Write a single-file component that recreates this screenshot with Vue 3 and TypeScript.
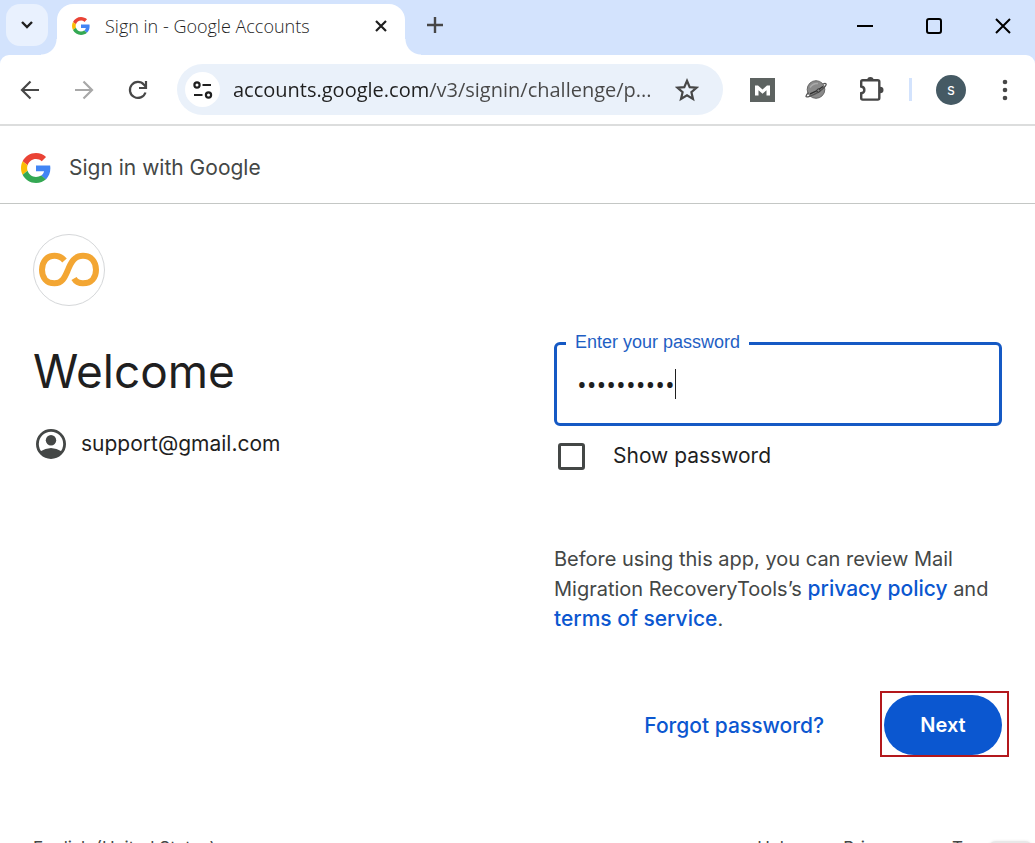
<script setup lang="ts">
import { ref } from 'vue'

const address = ref('accounts.google.com/v3/signin/challenge/p...')
const password = ref('abcdefghij')
const showPassword = ref(false)
const footerLinks: string[] = ['Help', 'Privacy', 'Terms']
</script>

<template>
  <div class="window">
    <header class="tab-strip">
      <button class="tab-search" type="button" aria-label="Search tabs">
        <svg width="14" height="10" viewBox="0 0 14 10"><path d="M2 2l5 5 5-5" fill="none" stroke="#1f1f1f" stroke-width="2.4" /></svg>
      </button>
      <div class="tab">
        <svg class="favicon" viewBox="0 0 48 48">
          <path fill="#EA4335" d="M24 9.5c3.54 0 6.71 1.22 9.21 3.6l6.85-6.85C35.9 2.38 30.47 0 24 0 14.62 0 6.51 5.38 2.56 13.22l7.98 6.19C12.43 13.72 17.74 9.5 24 9.5z" />
          <path fill="#4285F4" d="M46.98 24.55c0-1.57-.15-3.09-.38-4.55H24v9.02h12.94c-.58 2.96-2.26 5.48-4.78 7.18l7.73 6c4.51-4.18 7.09-10.36 7.09-17.65z" />
          <path fill="#FBBC05" d="M10.53 28.59c-.48-1.45-.76-2.99-.76-4.59s.27-3.14.76-4.59l-7.98-6.19C.92 16.46 0 20.12 0 24c0 3.88.92 7.54 2.56 10.78l7.97-6.19z" />
          <path fill="#34A853" d="M24 48c6.48 0 11.93-2.13 15.89-5.81l-7.73-6c-2.15 1.45-4.92 2.3-8.16 2.3-6.26 0-11.57-4.22-13.47-9.91l-7.98 6.19C6.51 42.62 14.62 48 24 48z" />
        </svg>
        <span class="tab-title">Sign in - Google Accounts</span>
        <button class="icon-button" type="button" aria-label="Close tab">
          <svg width="12" height="12" viewBox="0 0 12 12"><path d="M1 1l10 10M11 1L1 11" stroke="#1f1f1f" stroke-width="2.2" /></svg>
        </button>
      </div>
      <button class="icon-button new-tab" type="button" aria-label="New tab">
        <svg width="16" height="16" viewBox="0 0 16 16"><path d="M8 0v16M0 8h16" stroke="#474747" stroke-width="2.4" /></svg>
      </button>
      <div class="window-controls">
        <button class="icon-button" type="button" aria-label="Minimize">
          <svg width="16" height="16" viewBox="0 0 16 16"><path d="M0 8h16" stroke="#000" stroke-width="2" /></svg>
        </button>
        <button class="icon-button" type="button" aria-label="Maximize">
          <svg width="16" height="16" viewBox="0 0 16 16"><rect x="1" y="1" width="14" height="14" rx="2" fill="none" stroke="#000" stroke-width="2" /></svg>
        </button>
        <button class="icon-button" type="button" aria-label="Close">
          <svg width="16" height="16" viewBox="0 0 16 16"><path d="M1 1l14 14M15 1L1 15" stroke="#000" stroke-width="2" /></svg>
        </button>
      </div>
    </header>

    <nav class="toolbar">
      <div class="nav-buttons">
        <button class="icon-button" type="button" aria-label="Back">
          <svg width="20" height="20" viewBox="0 0 20 20"><path d="M19 10H2M10.5 1.5L2 10l8.5 8.5" fill="none" stroke="#474747" stroke-width="2.2" /></svg>
        </button>
        <button class="icon-button" type="button" aria-label="Forward">
          <svg width="20" height="20" viewBox="0 0 20 20"><path d="M1 10h17M9.5 1.5L18 10l-8.5 8.5" fill="none" stroke="#a8a8a8" stroke-width="2.2" /></svg>
        </button>
        <button class="icon-button" type="button" aria-label="Reload">
          <svg width="20" height="20" viewBox="0 0 20 20"><path d="M17.500 12.500a8 8 0 1 1-1.500-7.800L18 7" fill="none" stroke="#474747" stroke-width="2.2" /><path d="M18 1v7h-7" fill="none" stroke="#474747" stroke-width="2.2" /></svg>
        </button>
      </div>
      <div class="address-bar">
        <button class="site-info" type="button" aria-label="View site information">
          <svg width="20" height="18" viewBox="0 0 20 18" fill="none" stroke="#1f1f1f" stroke-width="2.2"><circle cx="4" cy="4" r="2.6" /><path d="M9.500 4H18M1 14h8.500" /><circle cx="15.500" cy="14" r="2.6" /></svg>
        </button>
        <input v-model="address" class="address" type="text" aria-label="Address and search bar" spellcheck="false" />
        <button class="icon-button" type="button" aria-label="Bookmark this tab">
          <svg width="24" height="24" viewBox="0 0 24 24"><path d="M12 2.800l2.700 6.300 6.900.6-5.200 4.500 1.600 6.700-6-3.600-6 3.600 1.600-6.700-5.200-4.500 6.900-.6z" fill="none" stroke="#474747" stroke-width="2.2" /></svg>
        </button>
      </div>
      <div class="extensions">
        <button class="icon-button" type="button" aria-label="Mail extension">
          <svg width="25" height="24" viewBox="0 0 25 24"><rect width="25" height="24" fill="#5d6361" /><path d="M5 17.500V7.500h3l4.500 4 4.500-4h3v10h-3.500v-5.200l-4 3.500-4-3.500v5.200z" fill="#fff" /></svg>
        </button>
        <button class="icon-button" type="button" aria-label="Planet extension">
          <svg width="22" height="20" viewBox="0 0 22 20"><circle cx="11" cy="9.500" r="8.800" fill="#8a8a8a" stroke="#666" /><path d="M5 7.500Q8 3 13 3.500" fill="none" stroke="#aaa" stroke-width="1.500" /><path d="M3.500 12.500C0 16 0 18 4.500 16.300C11 14 17 10 20 6.500C22.500 3.500 20.500 2.800 18 4" fill="none" stroke="#555" stroke-width="1.300" /><path d="M5 14Q12 11.500 18 6.500" fill="none" stroke="#333" stroke-width="1.400" /><circle cx="13.500" cy="10.500" r="1.600" fill="#888" stroke="#333" /></svg>
        </button>
        <button class="icon-button" type="button" aria-label="Extensions">
          <svg width="28" height="26" viewBox="0 0 28 26"><path d="M5.700 3.200h15.100q1.500 0 1.500 1.500v16.400q0 1.500-1.500 1.500H5.700q-1.500 0-1.500-1.500v-4.800c4.200-.8 4.200-6 0-6.800V4.700q0-1.500 1.500-1.500z" fill="none" stroke="#474747" stroke-width="2.400" /><path d="M10.200 3a3.200 3 0 0 1 6.400 0zM23 9.700a3.500 3.300 0 0 1 0 6.600z" fill="#474747" /></svg>
        </button>
        <span class="divider"></span>
        <button class="profile" type="button" aria-label="Profile">s</button>
        <button class="icon-button menu-button" type="button" aria-label="Menu">
          <svg width="6" height="22" viewBox="0 0 6 22" fill="#474747"><circle cx="3" cy="3" r="2.300" /><circle cx="3" cy="11" r="2.300" /><circle cx="3" cy="19" r="2.300" /></svg>
        </button>
      </div>
    </nav>

    <div class="page">
      <div class="page-header">
        <svg class="google-logo" viewBox="0 0 48 48">
          <path fill="#EA4335" d="M24 9.5c3.54 0 6.71 1.22 9.21 3.6l6.85-6.85C35.9 2.38 30.47 0 24 0 14.62 0 6.51 5.38 2.56 13.22l7.98 6.19C12.43 13.72 17.74 9.5 24 9.5z" />
          <path fill="#4285F4" d="M46.98 24.55c0-1.57-.15-3.09-.38-4.55H24v9.02h12.94c-.58 2.96-2.26 5.48-4.78 7.18l7.73 6c4.51-4.18 7.09-10.36 7.09-17.65z" />
          <path fill="#FBBC05" d="M10.53 28.59c-.48-1.45-.76-2.99-.76-4.59s.27-3.14.76-4.59l-7.98-6.19C.92 16.46 0 20.12 0 24c0 3.88.92 7.54 2.56 10.78l7.97-6.19z" />
          <path fill="#34A853" d="M24 48c6.48 0 11.93-2.13 15.89-5.81l-7.73-6c-2.15 1.45-4.92 2.3-8.16 2.3-6.26 0-11.57-4.22-13.47-9.91l-7.98 6.19C6.51 42.62 14.62 48 24 48z" />
        </svg>
        <span>Sign in with Google</span>
      </div>

      <main class="content">
        <section class="intro">
          <svg class="app-logo" viewBox="0 0 72 72">
            <circle cx="36" cy="36" r="35.500" fill="#fff" stroke="#d5d7d9" />
            <path d="M31.500 26.500C28.500 23 25.500 21.800 21.500 21.800C13.500 21.800 9 28 9 35.700C9 43.500 13.500 49.300 21.500 49.300C29 49.300 31.500 44 34.500 37C38 28 41.500 21.800 50 21.800C58.500 21.800 63 28 63 35.700C63 43.500 58.500 49.300 50 49.300C46 49.300 43 48 41 44.500" fill="none" stroke="#f3a633" stroke-width="6" />
          </svg>
          <h1>Welcome</h1>
          <div class="account">
            <svg width="30" height="30" viewBox="0 0 30 30">
              <circle cx="15" cy="15" r="13.600" fill="#fff" stroke="#444746" stroke-width="2.800" />
              <circle cx="15" cy="11.300" r="5.200" fill="#444746" />
              <path d="M4 22.500Q15 15.500 26 22.500Q22 28.500 15 28.500T4 22.500z" fill="#444746" />
            </svg>
            <span>support@gmail.com</span>
          </div>
        </section>

        <form class="sign-in" @submit.prevent>
          <div class="field">
            <label for="password">Enter your password</label>
            <input id="password" v-model="password" :type="showPassword ? 'text' : 'password'" autocomplete="off" />
            <span class="caret"></span>
          </div>
          <label class="show-password">
            <input v-model="showPassword" type="checkbox" />
            <span>Show password</span>
          </label>
          <p class="notice">
            Before using this app, you can review Mail Migration RecoveryTools’s
            <a href="#privacy">privacy policy</a> and <a href="#terms">terms of service</a>.
          </p>
          <div class="actions">
            <a class="forgot" href="#forgot">Forgot password?</a>
            <div class="next-wrap">
              <button class="next" type="submit">Next</button>
            </div>
          </div>
        </form>
      </main>

      <footer class="footer">
        <span>English (United States)</span>
        <nav class="footer-links">
          <a v-for="link in footerLinks" :key="link" href="#">{{ link }}</a>
        </nav>
        <span class="corner-widget"></span>
      </footer>
    </div>
  </div>
</template>

<style>
body {
  margin: 0;
}
</style>

<style scoped>
* {
  box-sizing: border-box;
}

.window {
  display: flex;
  flex-direction: column;
  height: 100vh;
  overflow: hidden;
  background: #d3e3fd;
  color: #1f1f1f;
  font-family: Inter, "Liberation Sans", sans-serif;
}

button {
  padding: 0;
  border: 0;
  background: none;
  font: inherit;
  cursor: pointer;
}

svg {
  display: block;
  flex: none;
}

.icon-button {
  display: grid;
  place-items: center;
  flex: none;
}

.tab-strip {
  display: flex;
  align-items: stretch;
  flex: none;
  height: 55px;
  padding: 4px 24px 0 6px;
}

.tab-search {
  display: grid;
  place-items: center;
  width: 42px;
  height: 42px;
  margin-right: 9px;
  border-radius: 14px;
  background: #e9f1fe;
}

.tab {
  position: relative;
  display: flex;
  align-items: center;
  width: 348px;
  padding: 0 18px 8px 15px;
  border-radius: 16px 16px 0 0;
  background: #fff;
}

.tab::before,
.tab::after {
  content: "";
  position: absolute;
  bottom: 0;
  width: 16px;
  height: 16px;
}

.tab::before {
  right: 100%;
  background: radial-gradient(circle at 0 0, transparent 15px, #fff 16px);
}

.tab::after {
  left: 100%;
  background: radial-gradient(circle at 100% 0, transparent 15px, #fff 16px);
}

.favicon {
  width: 18px;
  height: 18px;
}

.tab-title {
  flex: 1;
  margin-left: 15px;
  font-family: "Open Sans", "Noto Sans", sans-serif;
  font-size: 18px;
  font-weight: 300;
  white-space: nowrap;
}

.new-tab {
  width: 40px;
  height: 42px;
  margin-left: 10px;
}

.window-controls {
  display: flex;
  gap: 53px;
  height: 44px;
  margin-left: auto;
}

.toolbar {
  display: flex;
  align-items: center;
  flex: none;
  height: 71px;
  padding: 0 27px 0 20px;
  border-bottom: 2px solid #dcdddd;
  border-radius: 9px 9px 0 0;
  background: #fff;
}

.nav-buttons {
  display: flex;
  gap: 34px;
}

.address-bar {
  display: flex;
  align-items: center;
  flex: 1;
  height: 51px;
  margin-left: 29px;
  padding: 0 24px 0 8px;
  border-radius: 26px;
  background: #eaf1fa;
}

.site-info {
  display: grid;
  place-items: center;
  flex: none;
  width: 35px;
  height: 35px;
  border-radius: 50%;
  background: #fff;
}

.address {
  flex: 1;
  min-width: 0;
  margin: 0 14px 0 13px;
  padding: 0;
  border: 0;
  outline: 0;
  background: linear-gradient(90deg, #1f1f1f 196px, #474747 196px);
  background-clip: text;
  color: transparent;
  font-family: "Open Sans", "Noto Sans", sans-serif;
  font-size: 20px;
  line-height: 30px;
}

.extensions {
  display: flex;
  align-items: center;
  margin-left: 27px;
}

.extensions > * + * {
  margin-left: 30px;
}

.extensions .divider {
  width: 3px;
  height: 23px;
  margin-left: 24px;
  background: #d3e3fd;
}

.extensions .profile {
  width: 30px;
  height: 30px;
  margin-left: 24px;
  border-radius: 50%;
  background: #455a64;
  color: #fff;
  font-size: 15px;
  line-height: 30px;
}

.extensions .menu-button {
  margin-left: 36px;
}

.page {
  display: flex;
  flex-direction: column;
  flex: 1;
  background: #fff;
}

.page-header {
  display: flex;
  align-items: center;
  gap: 18px;
  height: 78px;
  padding: 6px 21px 0;
  border-bottom: 1px solid #c4c7c5;
  color: #444746;
  font-size: 21px;
}

.google-logo {
  width: 30px;
  height: 30px;
}

.content {
  display: grid;
  grid-template-columns: 1fr 1fr;
  gap: 73px;
  padding: 30px 33px 0;
}

.app-logo {
  width: 72px;
  height: 72px;
}

h1 {
  margin: 35px 0 0;
  font-size: 46px;
  font-weight: 400;
  line-height: 60px;
}

.account {
  display: flex;
  align-items: center;
  gap: 15px;
  margin: 28px 0 0 3px;
  font-size: 21px;
  line-height: 30px;
}

.sign-in {
  padding-top: 108px;
}

.field {
  position: relative;
}

.field label {
  position: absolute;
  top: -12px;
  left: 12px;
  padding: 0 9px;
  background: #fff;
  color: #1f5fc4;
  font-family: "Liberation Sans", Arial, sans-serif;
  font-size: 18px;
  line-height: 24px;
}

.field input {
  display: block;
  width: 100%;
  height: 84px;
  padding: 0 20px;
  border: 3px solid #1559c4;
  border-radius: 6px;
  outline: 0;
  background: #fff;
  color: #1f1f1f;
  font-family: "Open Sans", sans-serif;
  font-size: 26px;
}

.caret {
  position: absolute;
  top: 27px;
  left: 121px;
  width: 1px;
  height: 30px;
  background: #1f1f1f;
}

.show-password {
  display: flex;
  align-items: center;
  gap: 28px;
  margin: 15px 0 0 4px;
  font-size: 21px;
  line-height: 30px;
}

.show-password input {
  appearance: none;
  width: 27px;
  height: 27px;
  margin: 0;
  border: 3px solid #444746;
  border-radius: 3px;
}

.show-password input:checked {
  background: #0b57d0;
}

.notice {
  margin: 73px 0 0;
  color: #444746;
  font-size: 20px;
  line-height: 30px;
}

a {
  color: #0b57d0;
  text-decoration: none;
}

.notice a {
  font-size: 21px;
  font-weight: 500;
  line-height: 24px;
}

.actions {
  display: flex;
  align-items: center;
  justify-content: flex-end;
  gap: 60px;
  margin-top: 61px;
}

.forgot {
  font-size: 21px;
  font-weight: 500;
}

.next-wrap {
  position: relative;
}

.next-wrap::after {
  content: "";
  position: absolute;
  inset: -4px -7px -2px -4px;
  border: 2px solid #b3181c;
  pointer-events: none;
}

.next {
  width: 118px;
  height: 60px;
  border-radius: 30px;
  background: #0b57d0;
  color: #fff;
  font-size: 20px;
  font-weight: 600;
}

.footer {
  position: relative;
  display: flex;
  justify-content: space-between;
  margin-top: 81px;
  padding: 0 33px;
  color: #444746;
  font-size: 17px;
  line-height: 24px;
  white-space: nowrap;
}

.footer-links {
  display: flex;
  gap: 49px;
}

.footer-links a {
  color: inherit;
}

.corner-widget {
  position: absolute;
  top: 5px;
  right: 2px;
  width: 45px;
  height: 24px;
  border-radius: 8px;
  background: #e8e8e8;
  box-shadow: 0 0 3px #e8e8e8;
}
</style>
